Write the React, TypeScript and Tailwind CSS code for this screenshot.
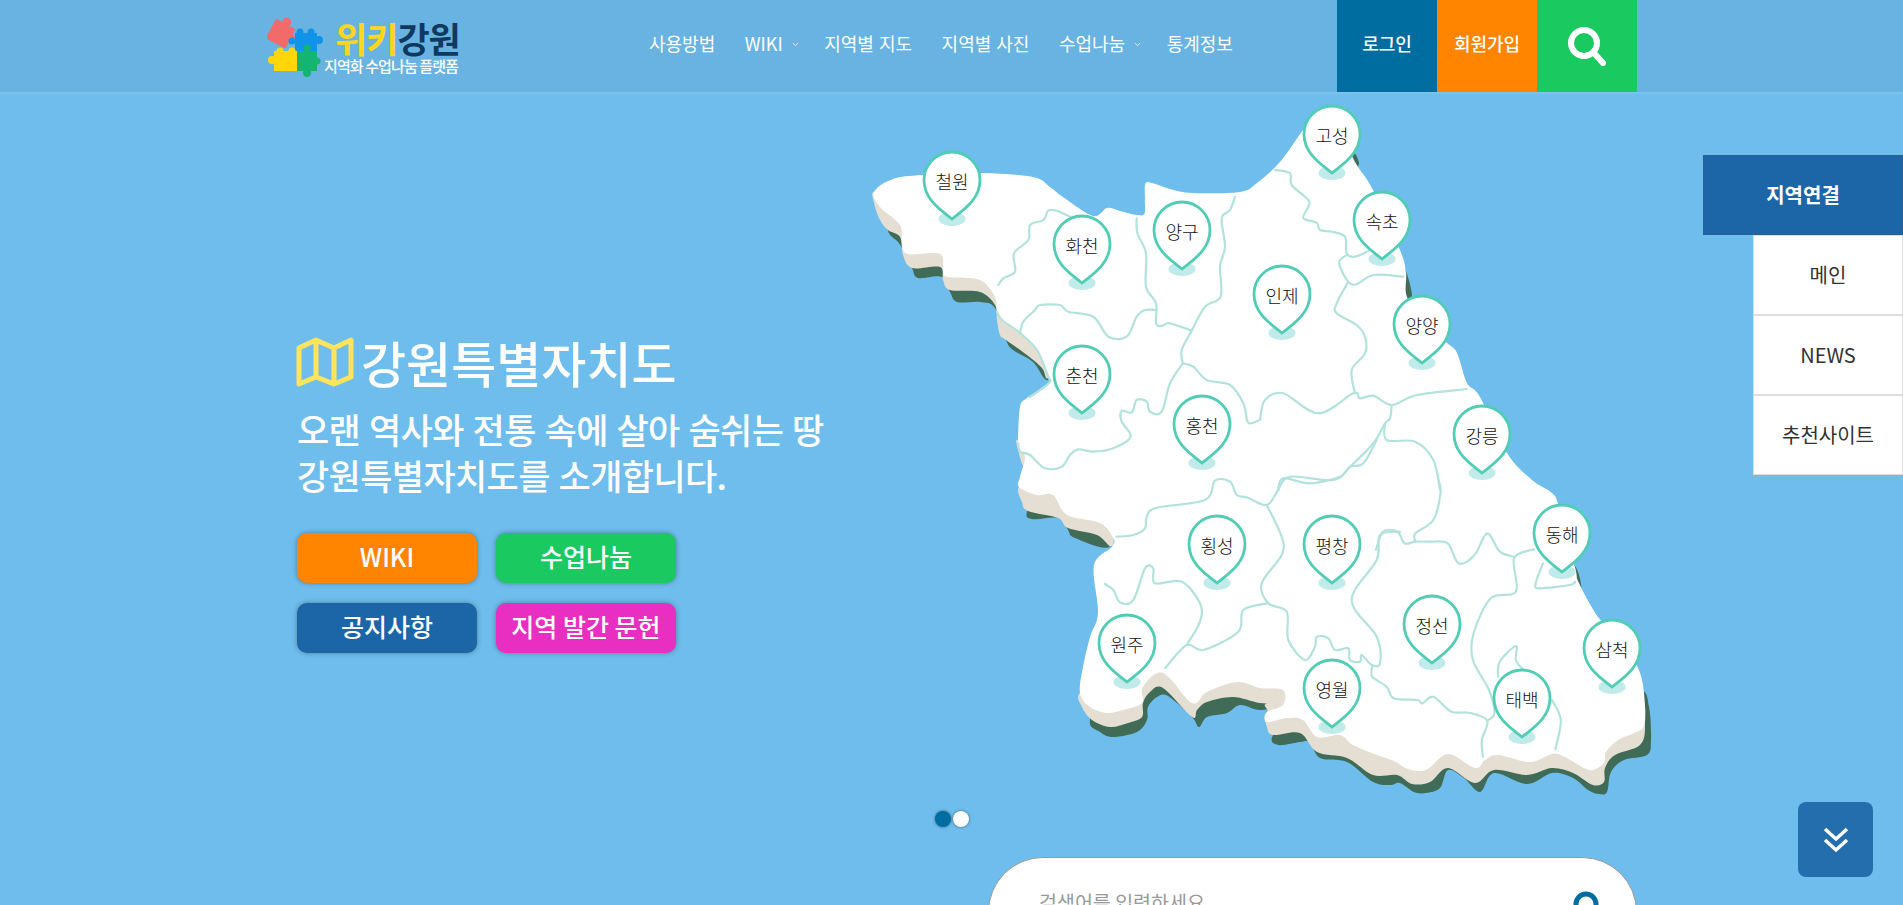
import { ChevronDown } from "lucide-react";

type Pt = [number, number];

// map coordinates are page pixels; traced from crops, so each run has its crop origin and x scale
const at = (ox: number, oy: number, sx: number, pts: Pt[]): Pt[] =>
  pts.map(([x, y]) => [ox + x / sx, oy + y / 3] as Pt);

function smooth(pts: Pt[], closed = false) {
  const n = pts.length;
  const p = (i: number) => (closed ? pts[(i + n) % n] : pts[Math.max(0, Math.min(n - 1, i))]);
  let d = `M${pts[0][0].toFixed(1)} ${pts[0][1].toFixed(1)}`;
  for (let i = 0; i < (closed ? n : n - 1); i++) {
    const [a, b, c, e] = [p(i - 1), p(i), p(i + 1), p(i + 2)];
    const c1 = [b[0] + (c[0] - a[0]) / 6, b[1] + (c[1] - a[1]) / 6];
    const c2 = [c[0] - (e[0] - b[0]) / 6, c[1] - (e[1] - b[1]) / 6];
    d += `C${c1[0].toFixed(1)} ${c1[1].toFixed(1)} ${c2[0].toFixed(1)} ${c2[1].toFixed(1)} ${c[0].toFixed(1)} ${c[1].toFixed(1)}`;
  }
  return d + (closed ? "Z" : "");
}

const land: Pt[] = [
  [874, 192], [893, 179], [923, 175], [982, 173], [1033, 177], [1050, 187], [1063, 197], [1093, 216],
  [1107, 208], [1120, 211], [1137, 215], [1145, 212], [1145, 185], [1152, 183], [1170, 189], [1193, 193],
  [1240, 192], [1257, 183], [1280, 162], [1303, 130], [1320, 108], [1340, 130], [1355, 162], [1373, 190],
  [1400, 250], [1406, 273], [1407, 297], [1425, 325], [1447, 343], [1457, 353], [1467, 383], [1480, 397],
  [1507, 453], [1532, 480], [1552, 493], [1559, 507], [1575, 567], [1579, 583], [1598, 617], [1620, 640],
  [1638, 668], [1644, 693], [1644, 725], [1634, 733], [1618, 740], [1606, 752], [1604, 763], [1593, 770],
  [1584, 768], [1563, 756], [1552, 754], [1530, 762], [1498, 755], [1485, 760], [1475, 768], [1448, 754],
  [1426, 770], [1408, 769], [1394, 761], [1377, 755], [1353, 745], [1340, 735], [1317, 737], [1303, 720],
  [1287, 718], [1267, 722], [1267, 712], [1283, 705], [1283, 690], [1260, 688], [1237, 682], [1207, 692],
  [1192, 703], [1163, 673], [1143, 687], [1142, 703], [1123, 710], [1107, 713], [1090, 707], [1080, 693],
  [1083, 667], [1090, 637], [1098, 613], [1094, 565], [1112, 547], [1113, 538], [1100, 523], [1067, 515],
  [1053, 495], [1037, 495], [1019, 487], [1020, 477], [1025, 457], [1018, 447], [1018, 440], [1020, 407],
  [1027, 398], [1049, 383], [1048, 376], [1037, 350], [1020, 333], [1002, 320], [997, 312], [995, 297],
  [980, 280], [948, 277], [943, 272], [940, 254], [908, 254], [902, 243], [900, 225], [880, 207],
];

const darkSides: Pt[][] = [
  [[888, 230], [898, 242], [903, 250], [912, 268], [918, 278], [942, 277], [950, 292], [957, 302], [980, 302], [995, 308], [1006, 340], [1013, 350], [1033, 362], [1048, 380], [1060, 350], [950, 230], [895, 205]],
  [[1027, 511], [1032, 519], [1060, 518], [1068, 530], [1075, 538], [1110, 546], [1100, 500], [1040, 480]],
  [[1090, 720], [1100, 732], [1113, 737], [1137, 732], [1147, 720], [1148, 707], [1157, 697], [1168, 696], [1192, 717], [1199, 727], [1207, 717], [1227, 713], [1240, 705], [1260, 710], [1282, 705], [1295, 705], [1290, 660], [1110, 680]],
  [[1273, 735], [1278, 745], [1300, 742], [1310, 742], [1320, 758], [1347, 762], [1373, 782], [1390, 785], [1400, 783], [1414, 792], [1426, 793], [1440, 788], [1448, 770], [1464, 778], [1480, 792], [1494, 773], [1527, 784], [1552, 773], [1573, 778], [1588, 790], [1599, 794], [1607, 792], [1611, 772], [1624, 760], [1647, 755], [1651, 740], [1649, 707], [1640, 690], [1600, 700], [1300, 700]],
  [[1352, 150], [1359, 163], [1352, 170]],
  [[1404, 268], [1412, 296], [1402, 300]],
  [[1573, 565], [1579, 575], [1581, 590], [1573, 590]],
];

const beigeSides: Pt[][] = [
  [[874, 192], [874, 203], [880, 220], [888, 230], [900, 237], [903, 255], [912, 268], [940, 267], [943, 280], [950, 290], [980, 292], [995, 305], [997, 320], [1000, 335], [1006, 340], [1027, 355], [1042, 368], [1048, 378], [1060, 350], [950, 230], [895, 205]],
  [[1017, 440], [1018, 450], [1024, 467], [1030, 455]],
  [[1019, 487], [1022, 502], [1028, 511], [1058, 518], [1068, 528], [1097, 535], [1110, 546], [1113, 538], [1100, 500], [1040, 480]],
  [[1095, 565], [1097, 580], [1100, 587], [1110, 560]],
  [[1080, 693], [1082, 707], [1092, 720], [1110, 727], [1128, 723], [1142, 717], [1143, 703], [1150, 692], [1163, 688], [1192, 717], [1197, 710], [1207, 702], [1233, 697], [1260, 703], [1283, 704], [1295, 704], [1290, 660], [1110, 680]],
  [[1267, 712], [1267, 727], [1273, 735], [1300, 733], [1317, 752], [1347, 758], [1373, 775], [1397, 775], [1412, 784], [1430, 782], [1448, 768], [1475, 783], [1494, 770], [1527, 775], [1552, 768], [1573, 773], [1593, 785], [1604, 782], [1605, 768], [1615, 755], [1640, 745], [1645, 725], [1640, 695], [1600, 700], [1300, 700]],
  [[1145, 198], [1146, 213], [1150, 205]],
];

const borders: Pt[][] = [
  // light edge along the Chuncheon coast
  [[997, 312], [1002, 320], [1020, 333], [1037, 350], [1048, 376], [1049, 383], [1030, 397]],
  at(860, 90, 3, [[415, 585], [430, 565], [465, 545], [462, 490], [505, 450], [510, 405], [550, 390], [565, 362], [590, 362], [630, 380]]),
  at(860, 90, 3, [[480, 730], [490, 695], [525, 660], [540, 645], [600, 645], [625, 665], [700, 680], [745, 740], [800, 740], [830, 680], [855, 660], [890, 660]]),
  at(860, 90, 3, [[830, 385], [832, 430], [858, 490], [858, 590], [888, 640], [888, 700], [905, 708], [930, 700], [995, 722]]),
  at(860, 90, 3, [[1125, 320], [1110, 360], [1085, 385], [1095, 470], [1080, 530], [1082, 620], [1035, 650], [995, 722], [965, 780], [968, 820]]),
  at(860, 90, 3, [[968, 820], [930, 880], [905, 965], [870, 965], [860, 935], [830, 930], [815, 968], [785, 962], [785, 995], [812, 1040], [760, 1075], [700, 1085], [655, 1078], [630, 1095], [605, 1130], [555, 1135], [510, 1095], [480, 1085], [475, 1060]]),
  at(860, 90, 3, [[968, 820], [1000, 830], [1040, 870], [1110, 885], [1150, 940], [1165, 998], [1200, 990]]),
  at(1240, 90, 3, [[60, 990], [75, 930], [130, 910], [235, 970], [340, 910], [360, 925], [400, 917], [455, 945], [530, 915], [680, 897]]),
  at(1240, 90, 3, [[105, 240], [150, 250], [155, 285], [205, 330], [205, 350], [190, 385], [230, 398], [240, 420], [275, 425], [315, 440], [320, 490], [345, 500], [385, 483]]),
  at(1240, 90, 3, [[320, 495], [300, 510], [300, 530], [325, 575], [350, 583], [400, 555], [490, 560]]),
  at(1240, 90, 3, [[325, 575], [290, 640], [290, 670], [350, 705], [375, 740], [375, 790], [335, 840], [345, 910]]),
  at(1240, 90, 3, [[455, 945], [450, 985], [435, 1000], [400, 1060], [330, 1130], [280, 1170], [150, 1160], [115, 1200]]),
  at(1240, 90, 3, [[435, 1000], [440, 1050], [525, 1055], [580, 1110], [600, 1200]]),
  at(1000, 440, 3, [[834, 150], [800, 195], [740, 172], [710, 165], [690, 125], [645, 122], [615, 180], [470, 203], [440, 230], [435, 265], [400, 285], [350, 290]]),
  at(1000, 440, 3, [[800, 195], [845, 290], [845, 345], [785, 430], [805, 490], [860, 515], [865, 600], [915, 660], [945, 620], [950, 590], [985, 595], [1005, 630], [1045, 625], [1050, 660], [1080, 665], [1085, 645], [1115, 675], [1140, 670], [1130, 590], [1055, 480], [1130, 360], [1140, 285], [1200, 275]]),
  at(1000, 440, 3, [[834, 150], [850, 115], [930, 130], [1020, 110], [1050, 80], [1090, 70], [1130, 0]]),
  at(1000, 440, 3, [[805, 490], [730, 510], [715, 575], [610, 630], [560, 615], [495, 685]]),
  at(1000, 440, 3, [[560, 615], [600, 545], [600, 490], [545, 425], [465, 430], [460, 385], [435, 385], [400, 480], [360, 487], [340, 450], [315, 432]]),
  at(1340, 480, 2.785, [[90, 555], [90, 590], [130, 620], [150, 655], [215, 660], [230, 670], [260, 650], [310, 695], [360, 698], [410, 722], [395, 780], [398, 830]]),
  at(1340, 480, 2.785, [[410, 722], [430, 700], [415, 630], [370, 540], [372, 460], [420, 355], [490, 335], [485, 235], [540, 208]]),
  at(1340, 480, 2.785, [[100, 210], [120, 155], [160, 155], [180, 190], [210, 185], [250, 185], [300, 190], [330, 250], [375, 225], [410, 160], [445, 215], [485, 230]]),
  at(1340, 480, 2.785, [[210, 185], [210, 160], [260, 120], [280, 40], [275, 0]]),
  at(1340, 480, 2.785, [[565, 250], [545, 310], [555, 325], [640, 315], [655, 305]]),
  at(1340, 480, 2.785, [[440, 590], [445, 545], [490, 498], [490, 540], [510, 570]]),
  at(1340, 480, 2.785, [[590, 660], [615, 720], [600, 808]]),
];

// tip of each pin, page pixels
const pins: { name: string; x: number; y: number }[] = [
  { name: "철원", x: 952, y: 219 },
  { name: "화천", x: 1082, y: 283 },
  { name: "양구", x: 1182, y: 269 },
  { name: "춘천", x: 1082, y: 413 },
  { name: "홍천", x: 1202, y: 463 },
  { name: "고성", x: 1332, y: 173 },
  { name: "속초", x: 1382, y: 259 },
  { name: "인제", x: 1282, y: 333 },
  { name: "양양", x: 1422, y: 363 },
  { name: "강릉", x: 1482, y: 473 },
  { name: "횡성", x: 1217, y: 583 },
  { name: "평창", x: 1332, y: 583 },
  { name: "원주", x: 1127, y: 682 },
  { name: "영월", x: 1332, y: 727 },
  { name: "동해", x: 1562, y: 572 },
  { name: "정선", x: 1432, y: 663 },
  { name: "삼척", x: 1612, y: 687 },
  { name: "태백", x: 1522, y: 737 },
];

const navItems = [
  { label: "사용방법" },
  { label: "WIKI", sub: true },
  { label: "지역별 지도" },
  { label: "지역별 사진" },
  { label: "수업나눔", sub: true },
  { label: "통계정보" },
];

const heroButtons = [
  { label: "WIKI", color: "bg-[#ff8500]" },
  { label: "수업나눔", color: "bg-[#1bc961]" },
  { label: "공지사항", color: "bg-[#1c66a8]" },
  { label: "지역 발간 문헌", color: "bg-[#e82fc1]" },
];

function PuzzleLogo() {
  return (
    <svg width="58" height="66" viewBox="0 0 58 66" className="mb-[-2px]">
      <g fill="#f26a6a" transform="rotate(28 15 17)">
        <rect x="4" y="9" width="22" height="22" rx="1" />
        <circle cx="15" cy="7" r="4.5" />
        <circle cx="27" cy="20" r="4.5" />
      </g>
      <g fill="#0f94ea">
        <rect x="28" y="19" width="22" height="18" />
        <circle cx="33" cy="18" r="3.5" />
        <circle cx="44" cy="18" r="3.5" />
        <circle cx="52" cy="26" r="4" />
        <circle cx="25" cy="27" r="3.5" />
      </g>
      <g fill="#ffd60a">
        <rect x="7" y="37" width="24" height="20" />
        <circle cx="5" cy="46" r="4" />
        <circle cx="13" cy="37" r="3.5" />
        <circle cx="25" cy="37" r="3.5" />
        <circle cx="34" cy="46" r="3.5" />
      </g>
      <g fill="#14b573">
        <rect x="30" y="37" width="20" height="20" />
        <circle cx="40" cy="34" r="3.5" />
        <circle cx="40" cy="59" r="4" />
        <circle cx="50" cy="47" r="3.5" />
      </g>
    </svg>
  );
}

function Pin({ name, x, y }: { name: string; x: number; y: number }) {
  return (
    <div className="absolute h-[78px] w-[60px]" style={{ left: x - 860 - 30, top: y - 94 - 69 }}>
      <svg width="60" height="78" viewBox="0 0 60 78" className="absolute inset-0">
        <ellipse cx="30" cy="69" rx="13.5" ry="7" fill="#c1eaea" />
        <path
          d="M30 69C22 62 2 51 2 30A28 28 0 0 1 58 30C58 51 38 62 30 69Z"
          fill="#fff"
          stroke="#52cdb5"
          strokeWidth="2.8"
        />
      </svg>
      <span className="absolute inset-x-0 top-[19px] text-center text-[18px] font-light leading-6 text-[#111]">{name}</span>
    </div>
  );
}

function GangwonMap() {
  return (
    <div className="relative h-[717px] w-[800px]">
      <svg width="800" height="717" viewBox="860 94 800 717" className="absolute inset-0">
        {darkSides.map((s, i) => (
          <path key={i} d={smooth(s, true)} fill="#406b57" />
        ))}
        {beigeSides.map((s, i) => (
          <path key={i} d={smooth(s, true)} fill="#e4ded3" />
        ))}
        <path d={smooth(land, true)} fill="#fff" />
        {borders.map((b, i) => (
          <path key={i} d={smooth(b)} fill="none" stroke="#b3e2dd" strokeWidth="2.2" strokeLinecap="round" />
        ))}
      </svg>
      {pins.map((p) => (
        <Pin key={p.name} {...p} />
      ))}
    </div>
  );
}

export default function App() {
  return (
    <div className="relative h-[905px] overflow-hidden bg-[#6ebdec] font-['Noto_Sans_CJK_KR','Noto_Sans',sans-serif] text-white">
      <header className="flex h-[94px] border-b-2 border-[#7cc3ec] bg-[#68b3e2] pl-[267px] pr-[266px]">
        <a className="flex w-[382px] shrink-0 items-center">
          <PuzzleLogo />
          <div className="mt-[2px] flex flex-col">
            <span className="ml-[10px] flex text-[35px] font-bold leading-[38px] tracking-[-1px]">
              <span className="text-[#ffd61a]">위키</span>
              <span className="text-[#0f3a5f]">강원</span>
            </span>
            <span className="ml-[-1px] text-[15px] font-medium leading-[18px] tracking-[-0.9px]">지역화 수업나눔 플랫폼</span>
          </div>
        </a>
        <nav className="flex items-center gap-[29.5px] pb-[6px] text-[18px] [word-spacing:1px]">
          {navItems.map((item) => (
            <a key={item.label} className="flex items-center">
              {item.label}
              {item.sub && <ChevronDown size={9} className="ml-[8px] mr-[-5px] mt-[2px]" />}
            </a>
          ))}
        </nav>
        <div className="ml-auto flex text-[18px] font-medium">
          <a className="flex w-[100px] items-center justify-center bg-[#006da0] pb-[6px]">로그인</a>
          <a className="flex w-[100px] items-center justify-center bg-[#ff8500] pb-[6px]">회원가입</a>
          <a className="flex w-[100px] items-center justify-center bg-[#1bc961]">
            <svg width="40" height="40" viewBox="0 0 40 40" fill="none" stroke="#fff" strokeWidth="6" strokeLinecap="round">
              <circle cx="17" cy="17" r="13" />
              <path d="M27 27l9 10" />
            </svg>
          </a>
        </div>
      </header>

      <main className="flex">
        <section className="w-[860px] shrink-0 pl-[296px] pt-[238px]">
          <h1 className="flex items-center gap-[7px] text-[49px] font-medium leading-[60px]">
            <svg width="58" height="50" viewBox="0 0 58 50" fill="none" stroke="#ffe45c" strokeWidth="5" strokeLinejoin="round">
              <path d="M3 11L20 3 38 11 55 3V40L38 47 20 40 3 47ZM20 3V40M38 11V47" />
            </svg>
            강원특별자치도
          </h1>
          <p className="ml-[1px] mt-[14px] text-[35px] font-medium leading-[46px] tracking-[-0.6px] [word-spacing:1.5px]">
            오랜 역사와 전통 속에 살아 숨쉬는 땅
            <br />
            강원특별자치도를 소개합니다.
          </p>
          <div className="ml-[1px] mt-[35px] grid w-[380px] grid-cols-[180px_180px] gap-x-[19px] gap-y-[20px]">
            {heroButtons.map((b) => (
              <a
                key={b.label}
                className={`flex h-[50px] items-center justify-center rounded-[10px] pb-[3px] text-[25px] font-medium shadow-[0_0_5px_rgba(0,0,0,0.35)] ${b.color}`}
              >
                {b.label}
              </a>
            ))}
          </div>
        </section>

        <section className="flex flex-col">
          <GangwonMap />
          <div className="ml-[75px] flex gap-[2px]">
            <span className="h-4 w-4 rounded-full bg-[#006da0] shadow-[0_0_3px_rgba(0,0,0,0.5)]" />
            <span className="h-4 w-4 rounded-full bg-white shadow-[0_0_3px_rgba(0,0,0,0.5)]" />
          </div>
          <div className="ml-[128px] mt-[30px] flex h-[120px] w-[649px] items-start justify-between rounded-t-[55px] border border-[#999] bg-white pl-[50px] pr-[31px] pt-[30px]">
            <span className="text-[19.5px] leading-7 text-[#999]">검색어를 입력하세요</span>
            <svg width="32" height="32" viewBox="0 0 32 32" fill="none" stroke="#006da0" strokeWidth="5" strokeLinecap="round" className="mt-[3px]">
              <circle cx="13" cy="13" r="10" />
              <path d="M21 21l8 9" />
            </svg>
          </div>
        </section>
      </main>

      <aside className="absolute right-0 top-[155px] flex w-[200px] flex-col items-end">
        <div className="flex h-[80px] w-full items-center justify-center border border-[#2a5f92] bg-[#1c66a8] text-[20px] font-bold">
          지역연결
        </div>
        {["메인", "NEWS", "추천사이트"].map((label) => (
          <a
            key={label}
            className="flex h-[80px] w-[150px] items-center justify-center border border-[#ddd] bg-white text-[20px] text-[#333]"
          >
            {label}
          </a>
        ))}
      </aside>

      <button className="absolute left-[1798px] top-[802px] flex h-[75px] w-[75px] items-center justify-center rounded-lg bg-[#246eae]">
        <svg width="26" height="26" viewBox="0 0 26 26" fill="none" stroke="#fff" strokeWidth="3.5">
          <path d="M2 2l11 10 11-10M2 13l11 10 11-10" />
        </svg>
      </button>
    </div>
  );
}
